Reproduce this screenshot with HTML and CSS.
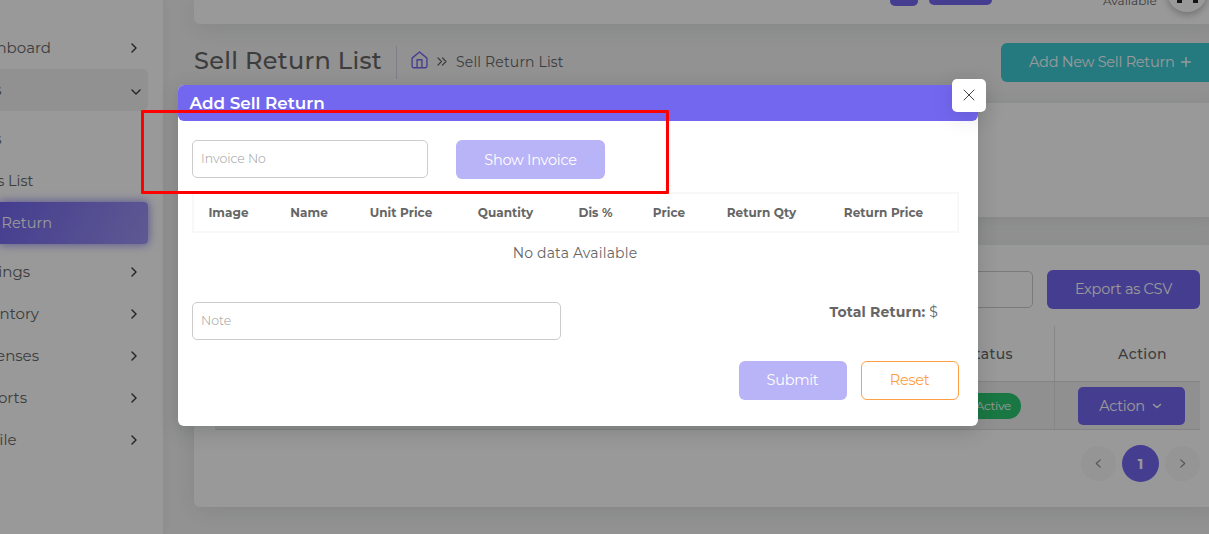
FILE: index.html
```html
<!DOCTYPE html>
<html lang="en">
<head>
<meta charset="utf-8">
<title>Sell Return List</title>
<link rel="stylesheet" href="styles.css">
</head>
<body>
<div class="app">
  <nav class="sidebar">
    <div class="item"><span class="label w-dashboard">Dashboard</span><svg class="chev" viewBox="0 0 10 10"><path d="M3 1l4 4-4 4"/></svg></div>
    <div class="item open"><span class="label w-sales">Sales</span><svg class="chev down" viewBox="0 0 10 10"><path d="M1 3l4 4 4-4"/></svg></div>
    <div class="item sub first"><span class="label w-sales">Sales</span></div>
    <div class="item sub"><span class="label w-list">Sales List</span></div>
    <div class="item current"><span class="label w-return">Sell Return</span></div>
    <div class="item after"><span class="label w-settings">Settings</span><svg class="chev" viewBox="0 0 10 10"><path d="M3 1l4 4-4 4"/></svg></div>
    <div class="item"><span class="label w-inventory">Inventory</span><svg class="chev" viewBox="0 0 10 10"><path d="M3 1l4 4-4 4"/></svg></div>
    <div class="item"><span class="label w-inventory">Expenses</span><svg class="chev" viewBox="0 0 10 10"><path d="M3 1l4 4-4 4"/></svg></div>
    <div class="item"><span class="label w-reports">Reports</span><svg class="chev" viewBox="0 0 10 10"><path d="M3 1l4 4-4 4"/></svg></div>
    <div class="item"><span class="label w-profile">Profile</span><svg class="chev" viewBox="0 0 10 10"><path d="M3 1l4 4-4 4"/></svg></div>
  </nav>
  <main class="main">
    <header class="topbar card">
      <span class="tool small"></span><span class="tool wide"></span>
      <span class="status-text">Available</span>
      <span class="avatar"><i></i><i></i></span>
    </header>
    <div class="heading">
      <h1>Sell Return List</h1>
      <div class="crumbs">
        <svg class="home" viewBox="0 0 16 17"><path d="M1 6.700L8 1l7 5.700V14.500a1.300 1.300 0 0 1-1.300 1.300H2.300A1.300 1.300 0 0 1 1 14.500zM5.700 15.800V8.300h4.600v7.500"/></svg>
        <svg class="raquo" viewBox="0 0 10 9"><path d="M1 1l3.500 3.500L1 8M5.500 1L9 4.500 5.500 8"/></svg>
        <span class="crumb">Sell Return List</span>
      </div>
      <button class="btn teal"><span>Add New Sell Return</span><svg class="plus" viewBox="0 0 11 11"><path d="M5.500 .5v10M.5 5.500h10"/></svg></button>
    </div>
    <section class="card filters"></section>
    <section class="card listing">
      <div class="tools"><span class="search"></span><button class="btn export">Export as CSV</button></div>
      <div class="grid head"><span class="c-status">Status</span><span class="c-action">Action</span></div>
      <div class="grid row">
        <span class="c-status"><b class="badge">Active</b></span>
        <span class="c-action"><button class="btn act"><span>Action</span><svg viewBox="0 0 10 10"><path d="M1.500 3.500L5 6.500l3.500-3"/></svg></button></span>
      </div>
      <div class="pages">
        <span class="page"><svg viewBox="0 0 10 10"><path d="M7 1L2.500 5 7 9"/></svg></span>
        <span class="page on">1</span>
        <span class="page"><svg viewBox="0 0 10 10"><path d="M3 1l4.500 4L3 9"/></svg></span>
      </div>
    </section>
  </main>
</div>
<div class="overlay">
  <div class="modal">
    <div class="modal-head">Add Sell Return</div>
    <button class="close"><svg viewBox="0 0 12 12"><path d="M1 1l10 10M11 1L1 11"/></svg></button>
    <div class="modal-body">
      <div class="lookup"><span class="field invoice">Invoice No</span><button class="btn soft show">Show Invoice</button></div>
      <div class="columns"><span>Image</span><span>Name</span><span>Unit Price</span><span>Quantity</span><span>Dis %</span><span>Price</span><span>Return Qty</span><span>Return Price</span></div>
      <p class="empty">No data Available</p>
      <div class="summary"><span class="field note">Note</span><span class="total"><b>Total Return:</b> <span>$</span></span></div>
      <div class="actions"><button class="btn soft submit">Submit</button><button class="btn reset">Reset</button></div>
    </div>
  </div>
</div>
<div class="highlight"></div>
</body>
</html>
```
FILE: styles.css
```css
* { box-sizing: border-box; }
body {
  margin: 0; width: 1209px; height: 534px; overflow: hidden; position: relative;
  font: 14px/20px Montserrat, Inter, sans-serif; color: #666; background: #f4f4f4;
}
button { font: inherit; border: 0; padding: 0; margin: 0; }
svg { display: block; fill: none; stroke: currentColor; stroke-linecap: round; stroke-linejoin: round; flex: none; }
.app { display: flex; width: 1209px; height: 534px; overflow: hidden; }
.sidebar { width: 163px; flex: none; background: #fff; padding-top: 27px; overflow: hidden; box-shadow: 0 0 12px rgba(0,0,0,.06); }
.item { width: 148px; height: 42px; display: flex; align-items: center; justify-content: space-between; padding-right: 9px; font-size: 15px; }
.label { display: flex; justify-content: flex-end; white-space: nowrap; flex: none; }
.chev { width: 10px; height: 10px; stroke: #444; stroke-width: 1.500; }
.down { margin-right: -2px; margin-top: 3px; }
.open { background: #f2f2f2; border-radius: 0 6px 6px 0; }
.first { margin-top: 7px; }
.sub { font-size: 14.500px; }
.current { background: linear-gradient(118deg, #7367f0, #9e95f5); color: #fff; border-radius: 0 4px 4px 0; box-shadow: 0 0 10px 1px rgba(115,103,240,.7); font-size: 14.500px; }
.after { margin-top: 7px; }
.w-dashboard { width: 51px; }
.w-sales { width: 1.500px; }
.w-list { width: 33.500px; }
.w-return { width: 52px; }
.w-settings { width: 30px; }
.w-inventory { width: 39px; }
.w-reports { width: 27px; }
.w-profile { width: 16.500px; }

.main { flex: none; width: 1060px; padding-left: 31px; }
.card { background: #fff; border-radius: 6px; box-shadow: 0 4px 24px rgba(34,41,47,.1); }
.topbar { height: 24px; border-radius: 0 0 6px 6px; display: flex; align-items: flex-start; padding-left: 696px; }
.tool { background: #7367f0; border-radius: 0 0 5px 5px; }
.small { width: 28px; height: 6px; margin-right: 11px; }
.wide { width: 63px; height: 5px; margin-right: 111px; }
.status-text { font-size: 12px; line-height: 14px; margin-top: -6px; width: 54px; white-space: nowrap; }
.avatar { width: 40px; height: 40px; margin: -28px 0 0 10px; border-radius: 50%; background: #fff; box-shadow: 0 3px 7px rgba(0,0,0,.25); display: flex; justify-content: center; gap: 11px; padding-top: 25px; }
.avatar i { width: 5px; height: 6px; background: #222; }
.heading { height: 79px; display: flex; align-items: flex-start; padding-top: 19px; }
h1 { margin: 3px 0 0; flex: none; font-size: 24px; line-height: 30px; font-weight: 500; width: 202px; white-space: nowrap; letter-spacing: .3px; }
.crumbs { margin-top: 3px; flex: none; width: 605px; height: 33px; border-left: 1px solid #d0d4e0; display: flex; align-items: center; padding-left: 14px; }
.home { width: 17px; height: 18px; margin-top: -6px; color: #7367f0; stroke-width: 1.300; }
.raquo { width: 10px; height: 9px; margin: -2px 9px 0 9px; stroke-width: 1.200; }
.crumb { letter-spacing: .16px; margin-top: -2px; }
.btn { height: 39px; border-radius: 6px; background: #7367f0; color: #fff; font-size: 14.500px; letter-spacing: -.26px; display: flex; align-items: center; justify-content: center; white-space: nowrap; flex: none; }
.teal { width: 230px; background: #3eccd6; justify-content: flex-start; padding: 0 0 2px 28px; }
.plus { width: 10px; height: 10px; stroke-width: 1.600; margin: 1px 0 0 7px; }
.filters { height: 114px; }
.listing { margin-top: 28px; height: 262px; padding: 25px 0 0 21px; }
.tools { width: 985px; display: flex; justify-content: flex-end; align-items: center; gap: 14px; }
.search { width: 250px; height: 37px; border: 1px solid #ccc; border-radius: 5px; }
.export { width: 153px; padding-bottom: 1px; }
.grid { width: 985px; display: flex; justify-content: flex-end; }
.head { height: 55px; margin-top: 17px; font-weight: 500; }
.c-status { width: 120px; border-right: 1px solid #dfdfdf; display: flex; align-items: center; justify-content: flex-end; padding-right: 41px; letter-spacing: .4px; }
.c-action { width: 145px; display: flex; align-items: center; justify-content: center; padding-left: 30px; letter-spacing: .4px; }
.row { height: 49px; background: #f0f0f0; border-top: 1px solid #dcdcdc; border-bottom: 1px solid #dcdcdc; }
.row .c-status { padding-right: 33px; letter-spacing: -.3px; }
.row .c-action { padding-left: 8px; }
.badge { background: #28c76f; color: #fff; font-weight: 400; font-size: 12px; height: 26px; line-height: 26px; border-radius: 13px; padding: 0 10px; }
.act { width: 107px; height: 38px; gap: 7px; border-radius: 5px; padding-right: 2px; }
.act svg { width: 10px; height: 10px; stroke-width: 1.500; }
.pages { width: 985px; display: flex; align-items: center; justify-content: flex-end; gap: 6px; margin-top: 15px; }
.page { width: 35px; height: 35px; border-radius: 50%; background: #f8f8f8; color: #888; display: flex; align-items: center; justify-content: center; }
.page svg { width: 9px; height: 9px; stroke-width: 1.200; }
.page.on { width: 37px; height: 37px; background: #7367f0; color: #fff; font-weight: 700; }

.overlay { position: absolute; inset: 0; background: rgba(0,0,0,.4); }
.modal { position: absolute; left: 178px; top: 85px; width: 800px; height: 341px; background: #fff; border-radius: 6px; box-shadow: 0 5px 20px rgba(34,41,47,.2); }
.modal-head { height: 36px; border-radius: 6px; background: #7367f0; color: #fff; font-size: 16.800px; line-height: 36px; font-weight: 600; padding-left: 11.500px; }
.close { position: absolute; left: 774px; top: -6px; width: 34px; height: 33px; border-radius: 5px; background: #fff; box-shadow: 0 5px 20px rgba(34,41,47,.15); display: flex; align-items: center; justify-content: center; color: #444; }
.close svg { width: 12px; height: 12px; margin-top: -1px; }
.modal-body { padding: 19px 19px 0 14px; }
.lookup { display: flex; gap: 28px; }
.field { border: 1px solid #ccc; border-radius: 5px; height: 38px; line-height: 35px; padding-left: 8px; font-size: 12.500px; font-weight: 300; color: #999; }
.invoice { width: 236px; }
.soft { background: #b9b3f7; }
.show { width: 149px; }
.columns { margin-top: 13px; height: 41px; border: 2px solid #f8f8f8; display: grid; grid-template-columns: 69px 92px 92px 117px 63px 84px 101px 143px; align-items: center; text-align: center; font-size: 12px; font-weight: 700; white-space: nowrap; letter-spacing: .06px; }
.empty { margin: 10px 1px 0 0; text-align: center; line-height: 20px; letter-spacing: .18px; }
.summary { margin-top: 39px; display: flex; justify-content: space-between; padding-right: 21px; }
.note { width: 369px; }
.total { letter-spacing: .16px; }
.total b { font-weight: 700; }
.actions { margin-top: 21px; display: flex; justify-content: flex-end; gap: 14px; }
.actions .btn { padding: 0 1px 2px 0; }
.actions .submit { width: 108px; }
.actions .reset { width: 98px; border: 1px solid #ff9f43; background: #fff; color: #ff9f43; }
.highlight { position: absolute; left: 141px; top: 110px; width: 528px; height: 84px; border: 3px solid #f00; border-radius: 1px; }
```
